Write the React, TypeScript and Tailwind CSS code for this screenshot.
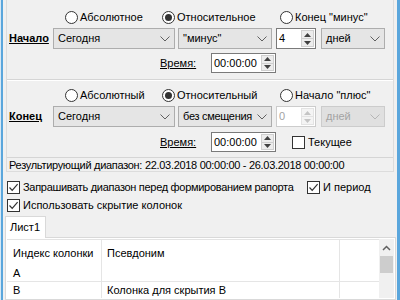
import { ReactNode } from "react";

function cn(...classes: Array<string | undefined | null | false>) {
  return classes.filter(Boolean).join(" ");
}

function Chevron({ disabled }: { disabled?: boolean }) {
  return (
    <svg width="10" height="6" viewBox="0 0 10 6" className="shrink-0">
      <path d="M0.5 0.5 L5 5 L9.5 0.5" fill="none" stroke={disabled ? "#b5b5b5" : "#606060"} strokeWidth="1" />
    </svg>
  );
}

function Radio({ checked, label }: { checked?: boolean; label: string }) {
  return (
    <div className="flex items-center gap-[2px]">
      <span className="flex h-[13px] w-[13px] shrink-0 items-center justify-center rounded-full border border-[#333333] bg-white">
        {checked && <span className="h-[7px] w-[7px] rounded-full bg-[#333333]" />}
      </span>
      <span>{label}</span>
    </div>
  );
}

function Check({ checked, label, className }: { checked?: boolean; label: string; className?: string }) {
  return (
    <div className="flex items-center gap-[3px]">
      <span className="flex h-[13px] w-[13px] shrink-0 items-center justify-center border border-[#333333] bg-white">
        {checked && (
          <svg width="11" height="11" viewBox="0 0 11 11">
            <path d="M1.5 5.5 L4.2 8.3 L9.6 2.2" fill="none" stroke="#333333" strokeWidth="1.2" />
          </svg>
        )}
      </span>
      <span className={className}>{label}</span>
    </div>
  );
}

function Combo({ value, className, textClassName, disabled }: { value: string; className?: string; textClassName?: string; disabled?: boolean }) {
  return (
    <div
      className={cn(
        "flex h-[21px] items-center justify-between border pl-[4px] pr-[4px]",
        disabled ? "border-[#cccccc] bg-[#e0e0e0] text-[#a3a3a3]" : "border-[#adadad] bg-[#e5e5e5]",
        className,
      )}
    >
      <span className={textClassName}>{value}</span>
      <Chevron disabled={disabled} />
    </div>
  );
}

function SpinButtons({ disabled }: { disabled?: boolean }) {
  const c = disabled ? "#c4c4c4" : "#404040";
  return (
    <div className="flex h-full w-[13px] shrink-0 flex-col">
      <div className={cn("flex flex-1 items-center justify-center border", disabled ? "border-[#e3e3e3] bg-[#f4f4f4]" : "border-[#cfcfcf] bg-[#ececec]")}>
        <svg width="7" height="4" viewBox="0 0 7 4">
          <path d="M0 4 L3.5 0 L7 4 Z" fill={c} />
        </svg>
      </div>
      <div className={cn("flex flex-1 items-center justify-center border border-t-0", disabled ? "border-[#e3e3e3] bg-[#f4f4f4]" : "border-[#cfcfcf] bg-[#ececec]")}>
        <svg width="7" height="4" viewBox="0 0 7 4">
          <path d="M0 0 L7 0 L3.5 4 Z" fill={c} />
        </svg>
      </div>
    </div>
  );
}

function Spin({ value, className, disabled }: { value: string; className?: string; disabled?: boolean }) {
  return (
    <div
      className={cn(
        "flex items-center justify-between border bg-white py-[1px] pl-[2px] pr-[1px]",
        disabled ? "border-[#cccccc] text-[#a3a3a3]" : "border-[#7a7a7a]",
        className,
      )}
    >
      <span>{value}</span>
      <SpinButtons disabled={disabled} />
    </div>
  );
}

function TimeRow({ extra }: { extra?: ReactNode }) {
  return (
    <div className="flex h-[20px] items-center">
      <span className="ml-[153px] w-[51px] underline">Время:</span>
      <Spin value="00:00:00" className="h-[20px] w-[65px]" />
      {extra}
    </div>
  );
}

export default function App() {
  return (
    <div className="flex h-[300px] w-[400px] overflow-hidden whitespace-nowrap bg-[#f0f0f0] font-['Liberation_Sans',Arial,sans-serif] text-[11px] leading-none text-black">
      <div className="w-[1px] bg-[#d6e8f5]" />
      <div className="w-[2px] bg-[#5aa6dc]" />
      <div className="flex w-[394px] flex-col">
        {/* period group */}
        <div className="ml-[3px] flex h-[178px] w-[388px] flex-col border-x border-b border-[#dcdcdc]">
          <div className="mt-[10px] flex h-[14px] items-center">
            <div className="ml-[58px] w-[97px]">
              <Radio label="Абсолютное" />
            </div>
            <div className="w-[118px]">
              <Radio checked label="Относительное" />
            </div>
            <Radio label='Конец "минус"' />
          </div>
          <div className="mt-[4px] flex h-[21px] items-center">
            <span className="w-[46px] pl-[2px] font-bold underline">Начало</span>
            <Combo value="Сегодня" className="w-[122px]" />
            <Combo value={'"минус"'} className="ml-[3px] w-[94px]" />
            <Spin value="4" className="ml-[4px] h-[21px] w-[40px]" />
            <Combo value="дней" className="ml-[5px] w-[64px]" />
          </div>
          <div className="mt-[4px]">
            <TimeRow />
          </div>
          <div className="mt-[6px] h-[2px] border-b border-t border-b-white border-t-[#d5d5d5]" />
          <div className="mt-[7px] flex h-[14px] items-center">
            <div className="ml-[58px] w-[97px]">
              <Radio label="Абсолютный" />
            </div>
            <div className="w-[118px]">
              <Radio checked label="Относительный" />
            </div>
            <Radio label='Начало "плюс"' />
          </div>
          <div className="mt-[4px] flex h-[21px] items-center">
            <span className="w-[46px] pl-[2px] font-bold underline">Конец</span>
            <Combo value="Сегодня" className="w-[122px]" />
            <Combo value="без смещения" className="ml-[3px] w-[94px] pl-[3px]" textClassName="tracking-[-0.3px]" />
            <Spin value="0" disabled className="ml-[4px] h-[21px] w-[40px]" />
            <Combo value="дней" disabled className="ml-[5px] w-[64px]" />
          </div>
          <div className="mt-[5px]">
            <TimeRow
              extra={
                <div className="ml-[16px]">
                  <Check label="Текущее" />
                </div>
              }
            />
          </div>
          <div className="mt-[5px] flex flex-1 items-center border-t border-[#d5d5d5] pl-[2px] pt-[2px] tracking-[-0.3px]">
            Результирующий диапазон: 22.03.2018 00:00:00 - 26.03.2018 00:00:00
          </div>
        </div>

        {/* options */}
        <div className="mt-[7px] flex h-[18px] items-center pl-[4px]">
          <div className="w-[300px]">
            <Check checked label="Запрашивать диапазон перед формированием рапорта" className="tracking-[-0.3px]" />
          </div>
          <Check checked label="И период" />
        </div>
        <div className="flex h-[18px] items-center pl-[4px]">
          <Check checked label="Использовать скрытие колонок" />
        </div>

        {/* tabs */}
        <div className="ml-[2px] mt-[2px] flex">
          <div className="relative z-10 -mb-[1px] flex h-[22px] w-[41px] items-center border-x border-t border-[#d9d9d9] bg-white pl-[4px]">
            Лист1
          </div>
        </div>
        <div className="ml-[2px] flex w-[391px] flex-1 border border-[#d9d9d9] bg-white p-[1px]">
          <div className="flex flex-1 flex-col border-t border-[#e3e3e3]">
            <div className="flex h-[26px]">
              <div className="flex w-[95px] items-center border-r border-[#e5e5e5] pl-[6px]">Индекс колонки</div>
              <div className="flex w-[238px] items-center border-r border-[#e5e5e5] pl-[5px]">Псевдоним</div>
              <div className="flex-1" />
            </div>
            <div className="flex h-[16px] border-b border-[#e5e5e5]">
              <div className="flex w-[95px] items-center border-r border-[#e5e5e5] pl-[6px]">A</div>
              <div className="flex w-[238px] items-center border-r border-[#e5e5e5] pl-[5px]" />
              <div className="flex-1" />
            </div>
            <div className="flex h-[16px]">
              <div className="flex w-[95px] items-center border-r border-[#e5e5e5] pl-[6px]">B</div>
              <div className="flex w-[238px] items-center border-r border-[#e5e5e5] pl-[5px]">Колонка для скрытия B</div>
              <div className="flex-1" />
            </div>
          </div>
          <div className="flex w-[15px] flex-col bg-[#f0f0f0]">
            <div className="flex h-[17px] items-center justify-center">
              <svg width="9" height="6" viewBox="0 0 9 6">
                <path d="M1 5 L4.5 1.5 L8 5" fill="none" stroke="#606060" strokeWidth="1.5" />
              </svg>
            </div>
            <div className="mx-[1px] h-[17px] bg-[#cdcdcd]" />
          </div>
        </div>
      </div>
      <div className="w-[3px] bg-[#5aa6dc]" />
    </div>
  );
}
